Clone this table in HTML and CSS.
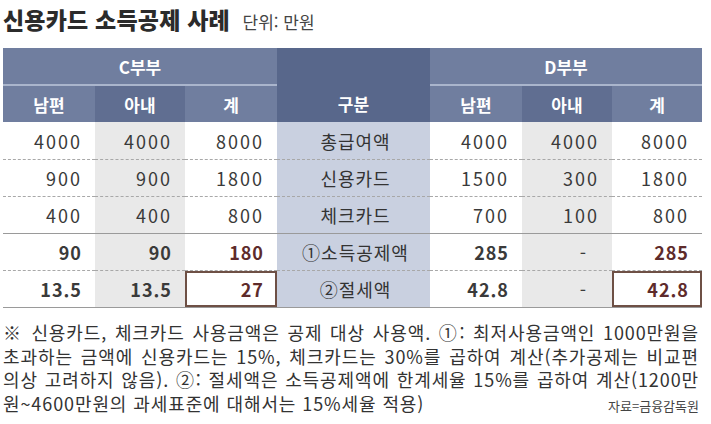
FILE: index.html
```html
<!DOCTYPE html>
<html lang="ko">
<head>
<meta charset="utf-8">
<link rel="stylesheet" href="styles.css">
</head>
<body>
<div class="page">
  <h1 class="title">신용카드 소득공제 사례 <span class="unit">단위: 만원</span></h1>
  <div class="grid">
    <div class="h group c1">C부부</div>
    <div class="h gubun">구분</div>
    <div class="h group c5">D부부</div>
    <div class="h sub">남편</div>
    <div class="h sub dark">아내</div>
    <div class="h sub">계</div>
    <div class="h sub">남편</div>
    <div class="h sub dark">아내</div>
    <div class="h sub">계</div>

    <div class="n">4000</div><div class="n g">4000</div><div class="n">8000</div><div class="k">총급여액</div><div class="n">4000</div><div class="n g">4000</div><div class="n">8000</div>
    <div class="n">900</div><div class="n g">900</div><div class="n">1800</div><div class="k">신용카드</div><div class="n">1500</div><div class="n g">300</div><div class="n">1800</div>
    <div class="n s">400</div><div class="n g s">400</div><div class="n s">800</div><div class="k s">체크카드</div><div class="n s">700</div><div class="n g s">100</div><div class="n s">800</div>
    <div class="n b">90</div><div class="n g b">90</div><div class="n b red">180</div><div class="k">①소득공제액</div><div class="n b">285</div><div class="n g dash">-</div><div class="n b red">285</div>
    <div class="n b s">13.5</div><div class="n g b s">13.5</div><div class="n b red s boxed">27</div><div class="k s">②절세액</div><div class="n b s">42.8</div><div class="n g s dash">-</div><div class="n b red s boxed">42.8</div>
  </div>
  <div class="note">
    <span class="line">※ 신용카드, 체크카드 사용금액은 공제 대상 사용액. ①: 최저사용금액인 1000만원을</span>
    <span class="line">초과하는 금액에 신용카드는 15%, 체크카드는 30%를 곱하여 계산(추가공제는 비교편</span>
    <span class="line">의상 고려하지 않음). ②: 절세액은 소득공제액에 한계세율 15%를 곱하여 계산(1200만</span>
    <span class="last"><span>원~4600만원의 과세표준에 대해서는 15%세율 적용)</span><span class="src">자료=금융감독원</span></span>
  </div>
</div>
</body>
</html>
```

FILE: styles.css
```css
* { box-sizing: border-box; }
html, body { margin: 0; padding: 0; background: #fff; }
body {
  font-family: "Noto Sans CJK KR", "Noto Sans", sans-serif;
  color: #333;
  width: 711px;
  height: 424px;
  overflow: hidden;
}
.page { padding: 4px 9px 0 3px; }
.title {
  margin: 0 0 11px 0;
  font-size: 23px;
  line-height: 30px;
  font-weight: 900;
  color: #2b2b2b;
  letter-spacing: 0.2px;
}
.unit {
  font-size: 17px;
  font-weight: 400;
  color: #444;
  margin-left: 6px;
  letter-spacing: 0;
}
.grid {
  display: grid;
  grid-template-columns: 92px 90px 92px 153px 92px 90px 90px;
  grid-template-rows: 38px 36px 38px 37px 37px 37px 37px;
}
.h {
  display: flex;
  align-items: center;
  justify-content: center;
  color: #fff;
  font-weight: 700;
  font-size: 17px;
  background: #707e9f;
}
.group { border-bottom: 2px solid #aab5cc; }
.c1 { grid-column: 1 / 4; }
.c5 { grid-column: 5 / 8; }
.gubun { grid-column: 4; grid-row: 1 / 3; background: #58678b; padding-top: 36px; }
.sub.dark { background: #606e91; }

.n, .k {
  display: flex;
  align-items: center;
  border-bottom: 1px dashed #a8a8a8;
  font-size: 18px;
}
.n {
  justify-content: flex-end;
  padding-right: 13px;
  letter-spacing: 2px;
  color: #3a3a3a;
}
.n.g { background: #e9e9e9; }
.k {
  justify-content: center;
  background: #c9d0e0;
  color: #333;
  padding-left: 4px;
  letter-spacing: 1px;
}
.s { border-bottom: 1px solid #9a9a9a; }
.b { font-weight: 700; letter-spacing: 1px; }
.red { color: #5e2b2b; }
.dash { padding-right: 24px; }
.boxed { box-shadow: inset 0 0 0 2px #6e5045; }

.note {
  margin-top: 13px;
  font-size: 18px;
  line-height: 23.5px;
  color: #333;
  padding-right: 3px;
  letter-spacing: 0.9px;
}
.line {
  display: block;
  white-space: nowrap;
  text-align: justify;
  text-align-last: justify;
}
.last {
  display: flex;
  justify-content: space-between;
  align-items: baseline;
  white-space: nowrap;
}
.src { font-size: 13px; color: #444; letter-spacing: 0; }
```
